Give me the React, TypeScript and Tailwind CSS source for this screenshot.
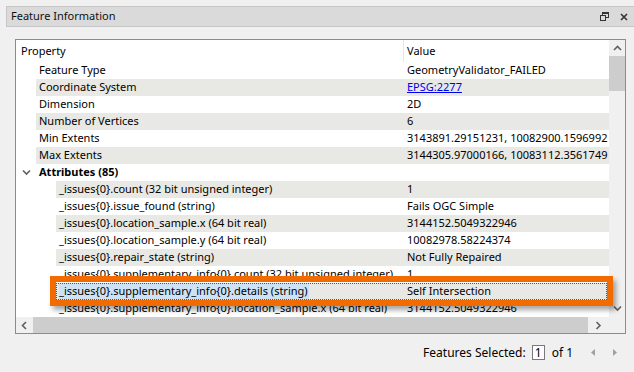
type Row = {
  level: number
  p: string
  v?: string
  link?: boolean
  group?: boolean
  selected?: boolean
}

const rows: Row[] = [
  { level: 1, p: 'Feature Type', v: 'GeometryValidator_FAILED' },
  { level: 1, p: 'Coordinate System', v: 'EPSG:2277', link: true },
  { level: 1, p: 'Dimension', v: '2D' },
  { level: 1, p: 'Number of Vertices', v: '6' },
  { level: 1, p: 'Min Extents', v: '3143891.29151231, 10082900.1596992' },
  { level: 1, p: 'Max Extents', v: '3144305.97000166, 10083112.3561749' },
  { level: 0, p: 'Attributes (85)', group: true },
  { level: 2, p: '_issues{0}.count (32 bit unsigned integer)', v: '1' },
  { level: 2, p: '_issues{0}.issue_found (string)', v: 'Fails OGC Simple' },
  { level: 2, p: '_issues{0}.location_sample.x (64 bit real)', v: '3144152.5049322946' },
  { level: 2, p: '_issues{0}.location_sample.y (64 bit real)', v: '10082978.58224374' },
  { level: 2, p: '_issues{0}.repair_state (string)', v: 'Not Fully Repaired' },
  { level: 2, p: '_issues{0}.supplementary_info{0}.count (32 bit unsigned integer)', v: '1' },
  { level: 2, p: '_issues{0}.supplementary_info{0}.details (string)', v: 'Self Intersection', selected: true },
  { level: 2, p: '_issues{0}.supplementary_info{0}.location_sample.x (64 bit real)', v: '3144152.5049322946' },
]

function Chevron({ dir, className }: { dir: 'up' | 'down' | 'left' | 'right'; className?: string }) {
  const d = {
    up: 'M1 5 L4.5 1.5 L8 5',
    down: 'M1 1.5 L4.5 5 L8 1.5',
    left: 'M5 1 L1.5 4.5 L5 8',
    right: 'M1.5 1 L5 4.5 L1.5 8',
  }[dir]
  const vert = dir === 'up' || dir === 'down'
  return (
    <svg className={className} width={vert ? 9 : 7} height={vert ? 7 : 9} viewBox={vert ? '0 0 9 7' : '0 0 7 9'} fill="none">
      <path d={d} stroke="#606060" strokeWidth={1.6} />
    </svg>
  )
}

function TreeRow({ row, stripe }: { row: Row; stripe: boolean }) {
  const bg = stripe ? 'bg-[#e8e8e5]' : 'bg-white'
  if (row.group) {
    return (
      <div className="flex h-[17px] items-center">
        <div className="w-[20px] flex justify-center items-center pl-[1px]">
          <Chevron dir="down" />
        </div>
        <div className={`flex-1 h-full flex items-center pl-[3px] font-bold ${bg}`}>{row.p}</div>
      </div>
    )
  }
  const indent = row.level === 1 ? 'w-[20px]' : 'w-[40px]'
  const pw = row.level === 1 ? 'w-[367px]' : 'w-[347px]'
  return (
    <div className="flex h-[17px]">
      <div className={`${indent} shrink-0 bg-white`} />
      <div className={`flex-1 flex h-full ${bg} ${row.selected ? 'outline outline-1 outline-dotted outline-[#555] -outline-offset-1 mr-[2px]' : ''}`}>
        <div className={`${pw} shrink-0 pl-[3px] flex items-center whitespace-nowrap overflow-hidden`}>
          <span className={row.selected ? 'bg-[#cde3f5] pr-[1px]' : ''}>{row.p}</span>
        </div>
        <div className="flex-1 pl-[4px] flex items-center whitespace-nowrap overflow-hidden">
          {row.link ? <span className="text-[#0000ee] underline">{row.v}</span> : row.v}
        </div>
      </div>
    </div>
  )
}

export default function App() {
  return (
    <div className="w-[634px] h-[372px] bg-[#f0f0f0] overflow-hidden text-[11px] text-black font-['Segoe_UI','Noto_Sans',sans-serif] relative">
      {/* title bar */}
      <div className="ml-[6px] mt-[6px] h-[21px] bg-[#dadada] border border-r-0 border-[#c6c6c6] flex items-center pl-[4px] pr-[6px] text-[#111]">
        <span className="flex-1">Feature Information</span>
        <svg width="9" height="9" viewBox="0 0 9 9" className="mr-[11px]" fill="none">
          <rect x="2.5" y="0.5" width="6" height="5" stroke="#333" />
          <rect x="0.5" y="3.5" width="5" height="5" fill="#dadada" stroke="#333" />
          <line x1="2.5" y1="1.5" x2="8.5" y2="1.5" stroke="#333" />
        </svg>
        <svg width="8" height="8" viewBox="0 0 8 8">
          <path d="M1 1 L7 7 M7 1 L1 7" stroke="#333" strokeWidth={1.6} />
        </svg>
      </div>

      {/* tree table */}
      <div className="ml-[15px] mt-[12px] w-[611px] h-[295px] border border-[#8c8c8c] bg-white grid grid-cols-[1fr_16px] grid-rows-[1fr_16px]">
        <div className="overflow-hidden">
          <div className="flex h-[22px] items-center">
            <div className="w-[387px] pl-[5px]">Property</div>
            <div className="h-full border-l border-[#e5e5e5] pl-[3px] flex items-center">Value</div>
          </div>
          {rows.map((r, i) => (
            <TreeRow key={i} row={r} stripe={i % 2 === 1} />
          ))}
        </div>
        <div className="bg-[#f0f0f0] flex flex-col">
          <div className="h-[16px] flex items-center justify-center">
            <Chevron dir="up" />
          </div>
          <div className="h-[35px] bg-[#cdcdcd]" />
          <div className="flex-1" />
          <div className="h-[17px] flex items-center justify-center">
            <Chevron dir="down" />
          </div>
        </div>
        <div className="bg-[#f0f0f0] flex">
          <div className="w-[17px] flex items-center justify-center">
            <Chevron dir="left" />
          </div>
          <div className="w-[555px] bg-[#cdcdcd]" />
          <div className="flex-1 flex items-center justify-center">
            <Chevron dir="right" />
          </div>
        </div>
        <div className="bg-[#f0f0f0]" />
      </div>

      {/* footer */}
      <div className="h-[38px] flex items-center justify-end pr-[17px] pb-[1px] text-[12px]">
        <span>Features Selected:</span>
        <div className="ml-[6px] w-[13px] h-[15px] border border-[#7a7a7a] bg-white flex items-center justify-center leading-none">1</div>
        <span className="ml-[7px]">of 1</span>
        <svg width="4" height="7" viewBox="0 0 4 7" className="ml-[18px]">
          <path d="M4 0 L0 3.5 L4 7 Z" fill="#a0a0a0" />
        </svg>
        <svg width="4" height="7" viewBox="0 0 4 7" className="ml-[18px]">
          <path d="M0 0 L4 3.5 L0 7 Z" fill="#a0a0a0" />
        </svg>
      </div>

      {/* orange annotation box */}
      <div className="absolute left-[50px] top-[276px] w-[563px] h-[30px] border-[6px] border-[#f26b00] shadow-[3px_4px_5px_rgba(0,0,0,0.35)]" />
    </div>
  )
}
